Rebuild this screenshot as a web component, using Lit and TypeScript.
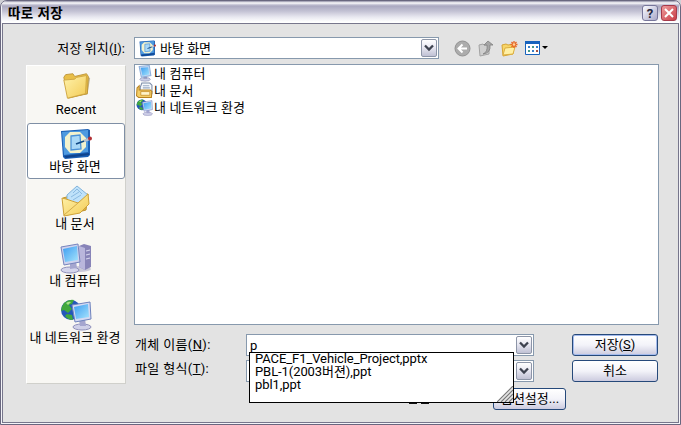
import { LitElement, html, css, svg } from "lit";
import { customElement, property } from "lit/decorators.js";

const desktop = svg`
  <path d="M1 3l27-2 2 1 0 25-2 2-23 2-2-2z" fill="#1b5fb4"/>
  <path d="M2 4l26-2 0 22-24 3z" fill="#4e9ae0"/>
  <path d="M10 4h10l6 6v9l-6 6H10l-5-6V9z" fill="#f3f2cd"/>
  <path d="M11 8l9-1 1 14-10 1z" fill="#a9d8f7" stroke="#4b92d8" stroke-width="1.300"/>
  <path d="M16 16l11-4" stroke="#124a86" stroke-width="1.800"/>
  <path d="M24 13l5-2" stroke="#b9c3d0" stroke-width="2.500"/>
  <circle cx="30" cy="10.500" r="2" fill="#b23034"/>
  <path d="M4 28l25-3v2L6 30z" fill="#0f438c"/>`;
const folder = svg`
  <path d="M6 29l22-3 3-18-2-2z" fill="#a08a52" opacity=".6"/>
  <path d="M2 7l2-3 8-1 2 3 13-3 2 3-1 19-21 5z" fill="#e9bf48" stroke="#bd9435"/>
  <path d="M2 10l12-1 2-2 11-2-1 20-20 5z" fill="url(#fold)" stroke="#cda540"/>`;
const documents = svg`
  <path d="M3 13l7-2 18-2-2 16-19 5z" fill="#e8b93c" stroke="#bf922b"/>
  <path d="M7 10L17 1l11 9-10 15-11-6z" fill="#bfe2fa" stroke="#82b3da"/>
  <path d="M13 8l4-4 5 5M11 12l8-5M13 15l8-5" stroke="#8bbbe2" fill="none"/>
  <path d="M2 13l4 1 12 4 10-9 1 10-9 9-16 3z" fill="url(#fold)" stroke="#cfa238"/>
  <path d="M4 30l14-12" stroke="#d4ab4a"/>`;
const computer = svg`
  <ellipse cx="20" cy="27" rx="11" ry="3" fill="#aaa9c6" opacity=".6"/>
  <path d="M19 4l5-2 7 2v21l-6 3-6-3z" fill="#8884b8"/>
  <path d="M19 4l6 2v22l-6-3z" fill="#b9b6dc"/>
  <path d="M26 9l4-1M26 13l4-1M26 17l4-1" stroke="#d6d5ee" stroke-width="1.200"/>
  <ellipse cx="10" cy="28" rx="9" ry="3" fill="#d4d5ec" stroke="#8f90bb"/>
  <path d="M10 20l6-1 1 7-7 1z" fill="#a5a6cf"/>
  <path d="M1 5l17-3 2 18-16 3z" fill="#cfd3ee" stroke="#7784bd"/>
  <path d="M3 7l14-3 1 14-13 2z" fill="url(#scr)"/>`;
const network = svg`
  <circle cx="11" cy="11" r="10" fill="#2457b9"/>
  <path d="M4 4q5-4 10-3l-2 4-3 1 3 4-4 4-4-3-3 1q0-4 3-8zM7 15l5 1 1 5q-5 0-8-4z" fill="#41a83e"/>
  <path d="M6 4q3-2 5-1l-3 3z" fill="#a7e387"/>
  <ellipse cx="22" cy="28" rx="9" ry="3" fill="#cfd0e8" stroke="#8f90bb"/>
  <path d="M19 21l6-1 1 7h-6z" fill="#a5a6cf"/>
  <path d="M12 6l18-3 1 17-16 3z" fill="#d5daf2" stroke="#6f83bd"/>
  <path d="M14 8l14-3 1 13-13 2z" fill="url(#scr)"/>`;
const papers = svg`
  <path d="M8 10l3-8h15l4 4v16H8z" fill="#f5f8fc" stroke="#7b8ba8" stroke-width="2"/>
  <path d="M13 7h12M13 11h13" stroke="#98a9c4" stroke-width="2"/>
  <path d="M2 11l4-4v8h21l3 3-1 11H5l-4-3z" fill="#f4ce67" stroke="#b98422" stroke-width="2"/>
  <path d="M9 18h17v7H9z" fill="#fff4ca" stroke="#c6912c" stroke-width="1.500"/>`;
const monitor = svg`
  <ellipse cx="17" cy="27" rx="10" ry="3.500" fill="#c9cde6" stroke="#8185aa"/>
  <path d="M14 20h7v6h-7z" fill="#9297bd"/>
  <path d="M6 3l19-2 3 19-18 3z" fill="#c9daf3" stroke="#8fb0dc" stroke-width="2"/>
  <path d="M9 5l14-1 2 14-13 2z" fill="url(#scr)"/>`;

const glyphs: Record<string, unknown> = { desktop, folder, documents, computer, network, papers, monitor };

@customElement("shell-icon")
class ShellIcon extends LitElement {
  @property() name = "folder";
  static styles = css`
    :host { display: block; width: 32px; height: 32px; flex: none; }
    svg { display: block; width: 100%; height: 100%; }
  `;
  render() {
    return html`<svg viewBox="0 0 32 32" fill="none">
      <defs>
        <linearGradient id="fold" x1="0" y1="0" x2="1" y2="1"><stop stop-color="#fff3ad"/><stop offset="1" stop-color="#f3cb55"/></linearGradient>
        <linearGradient id="scr" x1="0" y1="0" x2="1" y2="1"><stop stop-color="#3c9cf0"/><stop offset="1" stop-color="#a5e4fd"/></linearGradient>
      </defs>${glyphs[this.name]}</svg>`;
  }
}

const places = [
  ["folder", "Recent", "recent"],
  ["desktop", "바탕 화면", "selected"],
  ["documents", "내 문서", ""],
  ["computer", "내 컴퓨터", ""],
  ["network", "내 네트워크 환경", ""],
];
const files = [["monitor", "내 컴퓨터"], ["papers", "내 문서"], ["network", "내 네트워크 환경"]];
const matches = ["PACE_F1_Vehicle_Project,pptx", "PBL-1(2003버젼),ppt", "pbl1,ppt"];

const drop = html`<span class="drop"><svg width="10" height="8" viewBox="0 0 10 8"><path d="M1 1.500l4 4 4-4" fill="none" stroke="#3e4350" stroke-width="2.300"/></svg></span>`;

@customElement("app-root")
class AppRoot extends LitElement {
  static styles = css`
    * { box-sizing: border-box; }
    :host { display: block; width: 681px; height: 425px; overflow: hidden; background: #d0d0d6;
      font: 13px/17px Roboto, "Noto Sans CJK KR", sans-serif; color: #000; white-space: nowrap; }
    .window { height: 425px; border: 1px solid #69677f; border-radius: 7px 7px 0 0; background: #f4f4f8; padding: 0 1px 1px; display: flex; flex-direction: column; overflow: hidden; }
    .title { height: 23px; flex: none; display: flex; align-items: center; gap: 3px; padding: 2px 2px 0 6px; border-bottom: 1px solid #77768c;
      background: linear-gradient(#8f8da5 0, #fff 2px, #d7d6e2 3px, #aaa8c0 5px, #c2c1d3 10px, #e8e8f0 16px, #fff 21px); }
    .title b { flex: 1; font-size: 13.500px; letter-spacing: .4px; }
    .cap { width: 16px; height: 16px; border-radius: 3px; border: 1px solid #77769a; background: linear-gradient(135deg, #fafaff, #a9a8c8); display: grid; place-items: center; font-weight: 700; font-size: 13px; line-height: 13px; color: #26263c; }
    .cap.close { border-color: #a6394a; background: linear-gradient(135deg, #ee9c9c, #c93c46); color: #fff; }
    .body { flex: 1; border: 1px solid #77768c; border-top: 0; background: #e3e3e3; padding: 13px 18px 0 23px; }
    .bar { display: flex; height: 22px; align-items: center; }
    .look { width: 108px; text-align: right; padding-right: 9px; letter-spacing: .1px; }
    .field { background: #fff; border: 1px solid #8799ad; display: flex; align-items: center; height: 22px; padding: 1px 1px 1px 4px; }
    .place { width: 305px; }
    .place span.t { flex: 1; padding-left: 4px; }
    .drop { width: 16px; height: 100%; border: 1px solid #8d95a7; border-radius: 2px; background: linear-gradient(#fff, #e8e8f2 45%, #c0c1d4); display: grid; place-items: center; flex: none; }
    shell-icon.sm { width: 17px; height: 17px; }
    .tools { display: flex; align-items: center; gap: 7px; padding-left: 15px; }
    .tools svg { display: block; }
    .main { display: flex; margin-top: 5px; gap: 8px; }
    .side { width: 100px; height: 319px; margin-top: 1px; background: #f8f7f3; border: 1px solid #fff; border-right-color: #d0d0cb; border-bottom-color: #d0d0cb; }
    .item { height: 56px; margin-bottom: 1px; padding-top: 4px; display: flex; flex-direction: column; align-items: center; border: 1px solid transparent; border-radius: 3px; }
    .item shell-icon { height: 32px; width: 32px; }
    .item span { line-height: 14px; letter-spacing: .1px; margin-left: -2px; }
    .item.selected { background: #fff; border-color: #7f8fa5; }
    .item.recent shell-icon { width: 29px; height: 29px; margin-bottom: 3px; }
    .item.recent span { font-size: 13px; margin-left: 0; }
    .right { width: 525px; }
    .list { height: 261px; background: #fff; border: 1px solid #8799ad; }
    .file { display: flex; height: 17px; align-items: center; gap: 1px; padding-left: 1px; letter-spacing: .1px; }
    .form { display: flex; margin-top: 9px; position: relative; }
    .labels { width: 112px; padding-left: 1px; letter-spacing: .35px; }
    .labels div { height: 24px; line-height: 22px; }
    .inputs { width: 288px; display: flex; flex-direction: column; gap: 4px; }
    .inputs .field { padding-left: 3px; justify-content: space-between; }
    .buttons { margin-left: 38px; display: flex; flex-direction: column; gap: 4px; flex: none; }
    .btn { width: 86px; height: 22px; border: 1px solid #26497a; border-radius: 3px; background: linear-gradient(#fff, #f3f3f9 50%, #cccbdf); display: grid; place-items: center; line-height: 18px; }
    .btn.main-btn { box-shadow: inset 0 0 0 1px #a4bbed; }
    .options { width: 73px; position: absolute; left: 359px; top: 54px; padding-left: 1px; }
    .peek { position: absolute; left: 275px; top: 68px; display: flex; gap: 4px; }
    .peek i { width: 8px; height: 2px; background: #111; }
    .popup { position: absolute; left: 115px; top: 18px; width: 265px; height: 51px; background: #fff; border: 1px solid #000; padding-left: 5px; overflow: hidden; line-height: 13px; letter-spacing: -.08px; }
    .popup svg { position: absolute; right: 0; bottom: 0; }
    .popup div { height: 13px; }
    .popup div:first-child { margin-top: -1px; }
  `;
  render() {
    return html`<div class="window">
      <div class="title"><b>따로 저장</b><span class="cap">?</span>
        <span class="cap close"><svg width="10" height="10" viewBox="0 0 10 10"><path d="M1 1l8 8M9 1l-8 8" stroke="#fff" stroke-width="2"/></svg></span></div>
      <div class="body">
        <div class="bar">
          <div class="look">저장 위치(<u>I</u>):</div>
          <div class="field place"><shell-icon class="sm" name="desktop"></shell-icon><span class="t">바탕 화면</span>${drop}</div>
          <div class="tools">
            <svg width="17" height="17" viewBox="0 0 17 17"><circle cx="8.500" cy="8.500" r="7.500" fill="#acacac" stroke="#929292"/><path d="M13 8.500H5M8.500 4.500l-4 4 4 4" fill="none" stroke="#fff" stroke-width="2"/></svg>
            <svg width="16" height="17" viewBox="0 0 16 17"><path d="M1 5l4-1 1 1 5 0v9l-9 2z" fill="#cfcfcf" stroke="#a2a2a2"/><path d="M5 14q5-2 4-9H6l4-4 5 4h-3q1 8-7 9z" fill="#a6a6a6" stroke="#808080" stroke-width=".8"/></svg>
            <svg width="17" height="17" viewBox="0 0 17 17"><path d="M1 5l4-1 2 1 6-1-1 10-10 2z" fill="#f7d568" stroke="#d6a434"/><path d="M2 15l2-7 10-1-2 7z" fill="#fff0a5" stroke="#dbae40"/><path d="M13 1v7M9.500 4.500h7M10.500 2l5 5M15.500 2l-5 5" stroke="#e76521" stroke-width="1.300"/><circle cx="13" cy="4.500" r="1.300" fill="#ffd39c"/></svg>
            <svg width="23" height="16" viewBox="0 0 23 16"><path d="M.5 1.500h14v13H.5z" fill="#fff" stroke="#1763bd"/><path d="M0 1h15v3H0z" fill="#1763bd"/><path d="M3 6h2v2H3zM11 6h2v2h-2zM7 10h2v2H7z" fill="#397fc8"/><path d="M7 6h2v2H7zM3 10h2v2H3z" fill="#489a86"/><path d="M11 10h2v2h-2z" fill="#a45544"/><path d="M17 6h6l-3 3z" fill="#000"/></svg>
          </div>
        </div>
        <div class="main">
          <div class="side">${places.map(([i, t, c]) => html`<div class="item ${c}"><shell-icon name=${i}></shell-icon><span>${t}</span></div>`)}</div>
          <div class="right">
            <div class="list">${files.map(([i, t]) => html`<div class="file"><shell-icon class="sm" name=${i}></shell-icon><span>${t}</span></div>`)}</div>
            <div class="form">
              <div class="labels"><div>개체 이름(<u>N</u>):</div><div>파일 형식(<u>T</u>):</div></div>
              <div class="inputs"><div class="field"><span>p</span>${drop}</div><div class="field"><span></span>${drop}</div></div>
              <div class="buttons"><div class="btn main-btn"><span>저장(<u>S</u>)</span></div><div class="btn">취소</div></div>
              <div class="btn options">옵션설정...</div>
              <div class="peek"><i></i><i></i></div>
              <div class="popup">${matches.map((m) => html`<div>${m}</div>`)}
                <svg width="16" height="16" viewBox="0 0 16 16"><path d="M0 16L16 0v16z" fill="#e4e4e4"/><path d="M0 16L16 0M4 16L16 4M8 16l8-8M12 16l4-4" stroke="#777" stroke-width="1.100"/></svg></div>
            </div>
          </div>
        </div>
      </div>
    </div>`;
  }
}
